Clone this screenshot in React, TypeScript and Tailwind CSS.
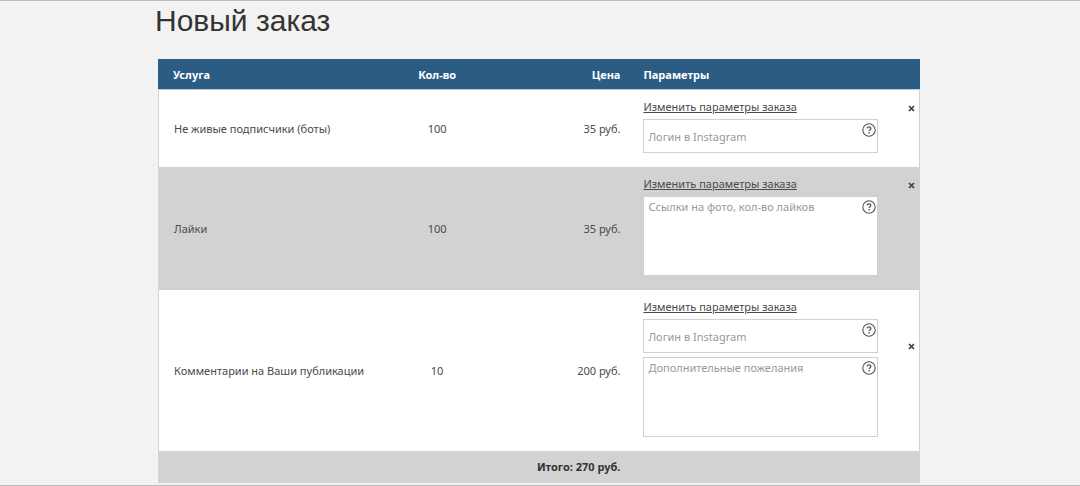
import React, { useState } from 'react';

interface Field {
    id: string;
    placeholder: string;
    multiline?: boolean;
}

interface OrderItem {
    id: number;
    title: string;
    count: number;
    price: number;
    fields: Field[];
}

const initialItems: OrderItem[] = [
    {
        id: 1,
        title: 'Не живые подписчики (боты)',
        count: 100,
        price: 35,
        fields: [{ id: 'bots-login', placeholder: 'Логин в Instagram' }],
    },
    {
        id: 2,
        title: 'Лайки',
        count: 100,
        price: 35,
        fields: [{ id: 'likes-links', placeholder: 'Ссылки на фото, кол-во лайков', multiline: true }],
    },
    {
        id: 3,
        title: 'Комментарии на Ваши публикации',
        count: 10,
        price: 200,
        fields: [
            { id: 'comments-login', placeholder: 'Логин в Instagram' },
            { id: 'comments-wishes', placeholder: 'Дополнительные пожелания', multiline: true },
        ],
    },
];

const HelpIcon = () => (
    <svg width="14" height="14" viewBox="0 0 14 14" fill="none" stroke="#555555" aria-hidden="true">
        <circle cx="7" cy="7" r="6.2" strokeWidth="1.1" />
        <path d="M5.2 5.5c0-1.1.8-1.7 1.8-1.7s1.8.6 1.8 1.6c0 1.2-1.7 1.3-1.7 2.7" strokeWidth="1.3" />
        <path d="M7.1 9v1.4" strokeWidth="1.4" />
    </svg>
);

const CloseIcon = () => (
    <svg width="7" height="7" viewBox="0 0 7 7" fill="none" stroke="#3f3f3f" strokeWidth="1.7" aria-hidden="true">
        <path d="M1 1l5 5M6 1L1 6" />
    </svg>
);

const ParamField = ({ field }: { field: Field }) => {
    const base = 'block w-full border bg-white pl-1 pr-6 text-[11px] text-[#444444] placeholder:text-[#999999] outline-none rounded-none border-[#d0d0d0]';
    return (
        <div className="relative">
            {field.multiline ? (
                <textarea id={field.id} aria-label={field.placeholder} placeholder={field.placeholder} className={`${base} h-20 resize-none pt-0.5 leading-4`} />
            ) : (
                <input id={field.id} type="text" aria-label={field.placeholder} placeholder={field.placeholder} className={`${base} h-[34px]`} />
            )}
            <button type="button" aria-label="Подсказка" className="absolute top-1 right-0.5">
                <HelpIcon />
            </button>
        </div>
    );
};

const App = () => {
    const [items, setItems] = useState(initialItems);
    const total = items.reduce((sum, item) => sum + item.price, 0);

    const removeItem = (id: number) => setItems(items.filter((item) => item.id !== id));

    return (
        <div className="min-h-screen border-t border-b border-[#bdbdbd] bg-[#f2f2f2] font-['Noto_Sans',sans-serif] text-[11px] leading-4 text-[#4a4a4a]">
            <div className="mx-auto max-w-[772px] pl-1 pr-1.5">
                <h1 className="-ml-1 mb-5 pl-px pt-0.5 font-['Liberation_Sans',Arial,sans-serif] text-[30px] leading-9 text-[#333333]">Новый заказ</h1>

                <table className="w-full table-fixed border-separate border-spacing-0">
                    <colgroup>
                        <col className="w-[31%]" />
                        <col className="w-[11%]" />
                        <col className="w-[20%]" />
                        <col />
                        <col className="w-[5%]" />
                    </colgroup>
                    <thead>
                        <tr className="h-[31px] bg-[#2b5c84] text-white">
                            <th className="border-b border-[#b5cfe0] pl-[15px] pt-0.5 text-left font-bold">Услуга</th>
                            <th className="border-b border-[#b5cfe0] pl-0.5 pt-0.5 text-center font-bold">Кол-во</th>
                            <th className="border-b border-[#b5cfe0] pr-2.5 pt-0.5 text-right font-bold">Цена</th>
                            <th className="border-b border-[#b5cfe0] pl-[13px] pt-0.5 text-left font-bold">Параметры</th>
                            <th className="border-b border-[#b5cfe0]"></th>
                        </tr>
                    </thead>
                    <tbody>
                        {items.map((item) => (
                            <tr key={item.id} className="bg-white even:bg-[#d2d2d2]">
                                <td className="border-l border-[#d2d2d2] pl-[15px]">{item.title}</td>
                                <td className="pl-0.5 text-center">{item.count}</td>
                                <td className="pr-2.5 text-right">{item.price} руб.</td>
                                <td className="pb-3.5 pl-[13px] pr-1 pt-2">
                                    <a href="#" className="mb-[3px] block leading-[18px] underline">Изменить параметры заказа</a>
                                    <div className="space-y-1">
                                        {item.fields.map((field) => (
                                            <ParamField key={field.id} field={field} />
                                        ))}
                                    </div>
                                </td>
                                <td className={`border-r border-[#d2d2d2] pr-1 text-right align-top ${item.fields.length > 1 ? 'pt-[53px]' : 'pt-[15px]'}`}>
                                    <button type="button" aria-label="Удалить" onClick={() => removeItem(item.id)} className="align-top">
                                        <CloseIcon />
                                    </button>
                                </td>
                            </tr>
                        ))}
                    </tbody>
                    <tfoot>
                        <tr className="h-8 bg-[#d2d2d2] font-bold text-[#333333]">
                            <td colSpan={3} className="pr-2.5 text-right">Итого: {total} руб.</td>
                            <td colSpan={2}></td>
                        </tr>
                    </tfoot>
                </table>
            </div>
        </div>
    );
};

export default App;
